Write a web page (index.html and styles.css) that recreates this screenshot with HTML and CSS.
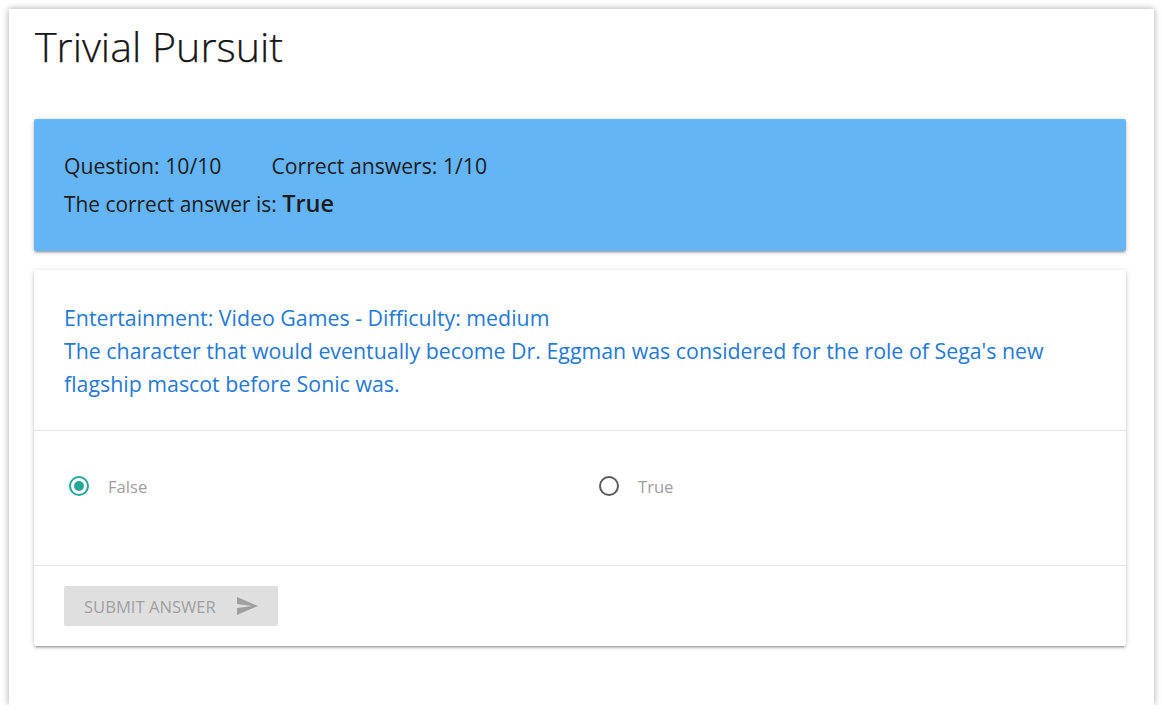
FILE: index.html
```html
<!DOCTYPE html>
<html lang="en">
<head>
<meta charset="utf-8">
<title>Trivial Pursuit</title>
<link rel="stylesheet" href="styles.css">
</head>
<body>
<div class="page">
  <h1 class="title">Trivial Pursuit</h1>

  <div class="card status-card">
    <div class="status-row">
      <span>Question: 10/10</span>
      <span>Correct answers: 1/10</span>
    </div>
    <div class="status-answer">The correct answer is: <strong class="answer">True</strong></div>
  </div>

  <div class="card question-card">
    <div class="question-content">
      <div class="question-meta">Entertainment: Video Games - Difficulty: medium</div>
      <div class="question-text">The character that would eventually become Dr. Eggman was considered for the role of Sega's new flagship mascot before Sonic was.</div>
    </div>
    <div class="question-options">
      <label class="option">
        <span class="radio checked"></span>
        <span class="option-label">False</span>
      </label>
      <label class="option">
        <span class="radio"></span>
        <span class="option-label">True</span>
      </label>
    </div>
    <div class="question-actions">
      <button class="submit-btn" disabled>
        <span>Submit answer</span>
        <svg class="send-icon" viewBox="0 0 24 24" width="24" height="24" aria-hidden="true"><path d="M2.01 21L23 12 2.01 3 2 10l15 2-15 2z"/></svg>
      </button>
    </div>
  </div>
</div>
</body>
</html>
```

FILE: styles.css
```css
* { box-sizing: border-box; }

html, body {
  margin: 0;
  background: #ffffff;
}

body {
  font-family: "Open Sans", "Noto Sans", sans-serif;
  color: #222222;
}

.page {
  margin: 9px 8px 0 9px;
  height: 696px;
  padding: 0 28px 0 25px;
  background: #ffffff;
  box-shadow: 0 0 7px rgba(0, 0, 0, 0.35);
  overflow: hidden;
}

.title {
  margin: 13px 0 49px 1px;
  font-size: 41.2px;
  font-weight: 300;
  line-height: 48px;
  color: #161616;
  -webkit-text-stroke: 0.25px #161616;
}

.card {
  border-radius: 2px;
  box-shadow: 0 2px 2px 0 rgba(0, 0, 0, 0.14),
              0 3px 1px -2px rgba(0, 0, 0, 0.12),
              0 1px 5px 0 rgba(0, 0, 0, 0.2);
}

.status-card {
  background: #64b5f6;
  padding: 32px 30px 24px;
  font-size: 21.2px;
  color: #1c1c1c;
  height: 132px;
}

.status-row {
  display: flex;
  gap: 50px;
  line-height: 30px;
}

.status-answer {
  font-size: 20.9px;
  line-height: 46px;
}

.answer {
  font-size: 23.5px;
  font-weight: 600;
  line-height: 1;
}

.question-card {
  margin-top: 19px;
  background: #ffffff;
}

.question-content {
  padding: 31px 30px 30px;
  font-size: 21.35px;
  line-height: 33px;
  color: #2479d5;
  border-bottom: 1px solid #e6e6e6;
}

.question-options {
  display: grid;
  grid-template-columns: 530px 1fr;
  padding: 43px 30px 67px;
  border-bottom: 1px solid #e6e6e6;
}

.option {
  display: flex;
  align-items: center;
  height: 24px;
  padding-left: 4.5px;
}

.radio {
  width: 20px;
  height: 20px;
  border: 2.5px solid #5a5a5a;
  border-radius: 50%;
  display: flex;
  align-items: center;
  justify-content: center;
  flex: none;
}

.radio.checked {
  border-color: #26a69a;
}

.radio.checked::after {
  content: "";
  width: 10px;
  height: 10px;
  border-radius: 50%;
  background: #26a69a;
}

.option-label {
  margin-left: 19.5px;
  font-size: 16.6px;
  color: #9e9e9e;
}

.question-actions {
  padding: 20px 30px;
}

.submit-btn {
  display: flex;
  align-items: center;
  gap: 19px;
  height: 40px;
  padding: 0 19px 0 20px;
  border: none;
  border-radius: 2px;
  background: #dfdfdf;
  color: #9f9f9f;
  font-family: "Open Sans", "Noto Sans", sans-serif;
  font-size: 16.6px;
  text-transform: uppercase;
  cursor: default;
}

.send-icon {
  fill: #9f9f9f;
  flex: none;
}
```
